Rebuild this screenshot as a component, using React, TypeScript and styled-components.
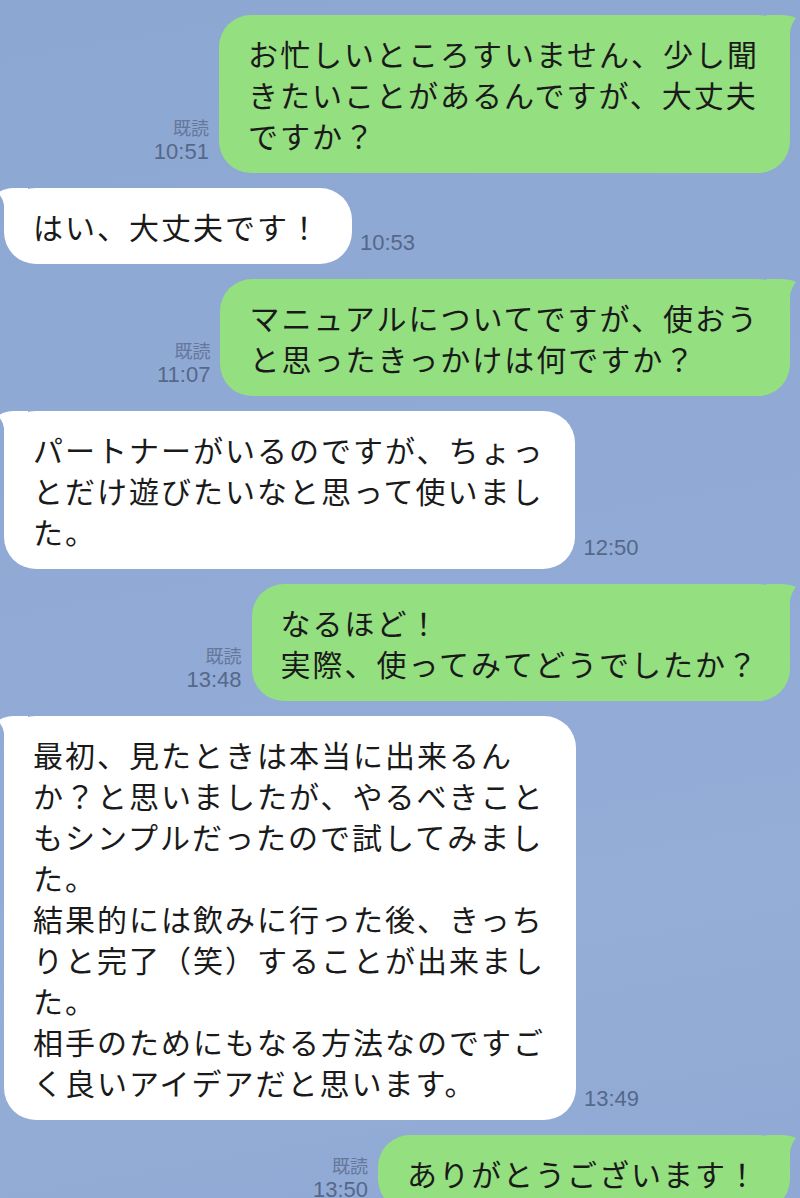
import React from "react";
import styled, { createGlobalStyle } from "styled-components";

const GlobalStyle = createGlobalStyle`
  html, body {
    margin: 0;
    padding: 0;
    background: #8fa9d4;
  }
  body {
    overflow: hidden;
  }
`;

const Chat = styled.div`
  width: 800px;
  height: 1198px;
  box-sizing: border-box;
  padding: 15px 10px 0 4px;
  display: flex;
  flex-direction: column;
  gap: 15px;
  overflow: hidden;
  background: linear-gradient(170deg, #8da7d3 0%, #91aad6 55%, #95aed8 75%, #8fa9d4 100%);
`;

const Row = styled.div<{ $mine: boolean }>`
  display: flex;
  flex-direction: ${(p) => (p.$mine ? "row" : "row-reverse")};
  justify-content: flex-end;
  align-items: flex-end;
  gap: ${(p) => (p.$mine ? "10px" : "8px")};
  flex-shrink: 0;
`;

const Meta = styled.div<{ $mine: boolean }>`
  display: flex;
  flex-direction: column;
  align-items: ${(p) => (p.$mine ? "flex-end" : "flex-start")};
  gap: 2px;
  padding-bottom: 10px;
  color: #566888;
  font-family: "Liberation Sans", "Noto Sans CJK JP", sans-serif;
`;

const ReadLabel = styled.span`
  display: block;
  font-family: "Noto Sans CJK JP", sans-serif;
  font-size: 18px;
  line-height: 24px;
  color: #66779a;
`;

const Time = styled.span`
  display: block;
  font-size: 22px;
  line-height: 22px;
`;

const Bubble = styled.div<{ $mine: boolean }>`
  position: relative;
  background: ${(p) => (p.$mine ? "#94df80" : "#ffffff")};
  border-radius: 32px;
  padding: 18px 31px 17px 29px;
  font-family: "Noto Sans CJK JP", sans-serif;
  font-size: 30px;
  line-height: 41px;
  letter-spacing: 2px;
  color: #1a1a1a;
  white-space: nowrap;
`;

const Line = styled.span`
  display: block;
`;

const Tail = styled.svg<{ $mine: boolean }>`
  position: absolute;
  top: 0;
  width: 30px;
  height: 30px;
  ${(p) => (p.$mine ? "right: -6px;" : "left: -6px;")}
`;

type Msg = {
  mine: boolean;
  lines: string[];
  time: string;
};

const messages: Msg[] = [
  {
    mine: true,
    lines: [
      "お忙しいところすいません、少し聞",
      "きたいことがあるんですが、大丈夫",
      "ですか？",
    ],
    time: "10:51",
  },
  { mine: false, lines: ["はい、大丈夫です！"], time: "10:53" },
  {
    mine: true,
    lines: ["マニュアルについてですが、使おう", "と思ったきっかけは何ですか？"],
    time: "11:07",
  },
  {
    mine: false,
    lines: [
      "パートナーがいるのですが、ちょっ",
      "とだけ遊びたいなと思って使いまし",
      "た。",
    ],
    time: "12:50",
  },
  {
    mine: true,
    lines: ["なるほど！", "実際、使ってみてどうでしたか？"],
    time: "13:48",
  },
  {
    mine: false,
    lines: [
      "最初、見たときは本当に出来るん",
      "か？と思いましたが、やるべきこと",
      "もシンプルだったので試してみまし",
      "た。",
      "結果的には飲みに行った後、きっち",
      "りと完了（笑）することが出来まし",
      "た。",
      "相手のためにもなる方法なのですご",
      "く良いアイデアだと思います。",
    ],
    time: "13:49",
  },
  { mine: true, lines: ["ありがとうございます！"], time: "13:50" },
];

const TailShape: React.FC<{ mine: boolean }> = ({ mine }) => (
  <Tail $mine={mine} viewBox="0 0 30 30" aria-hidden="true">
    {mine ? (
      <path d="M0 0 H14 Q24 0 30 3 Q25 9 24 17 V30 H0 Z" fill="#94df80" />
    ) : (
      <path d="M30 0 H16 Q6 0 0 5 Q5 10 6 17 V30 H30 Z" fill="#ffffff" />
    )}
  </Tail>
);

export default function App() {
  return (
    <>
      <GlobalStyle />
      <Chat>
        {messages.map((m, i) => (
          <Row key={i} $mine={m.mine}>
            <Meta $mine={m.mine}>
              {m.mine && <ReadLabel>既読</ReadLabel>}
              <Time>{m.time}</Time>
            </Meta>
            <Bubble $mine={m.mine}>
              <TailShape mine={m.mine} />
              {m.lines.map((l, j) => (
                <Line key={j}>{l}</Line>
              ))}
            </Bubble>
          </Row>
        ))}
      </Chat>
    </>
  );
}
